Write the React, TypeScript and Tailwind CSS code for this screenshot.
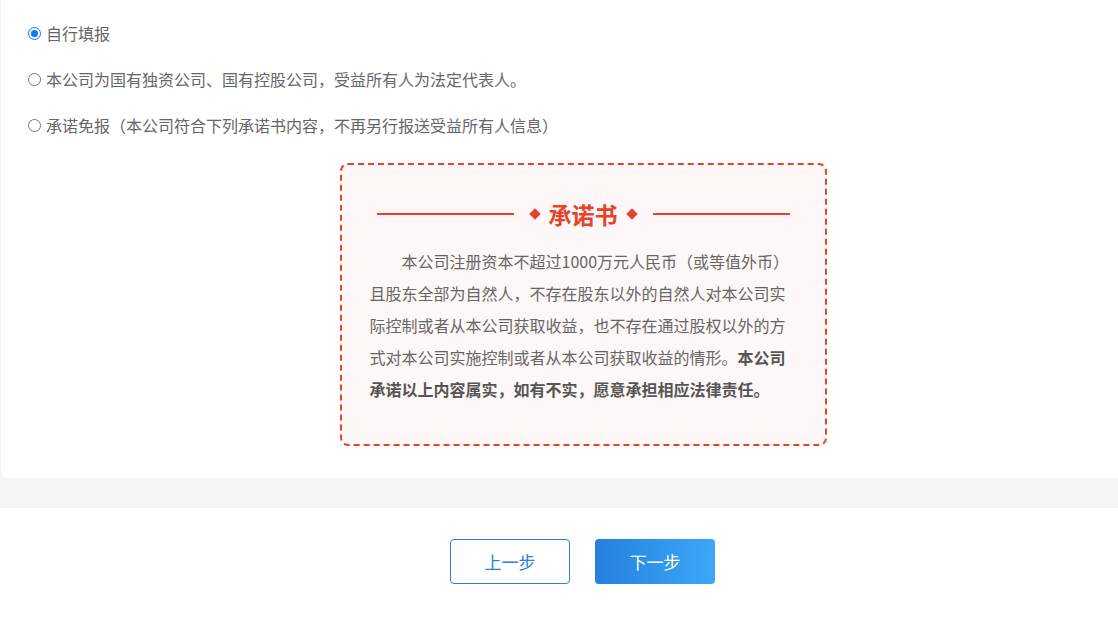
import React from "react";

const font = { fontFamily: '"Noto Sans CJK SC", "Noto Sans", sans-serif' };

function Radio({ checked }: { checked?: boolean }) {
  return checked ? (
    <span className="flex h-[13px] w-[13px] items-center justify-center rounded-full border-[1.5px] border-[#0a78ff] bg-white">
      <span className="h-[7px] w-[7px] rounded-full bg-[#0a78ff]" />
    </span>
  ) : (
    <span className="h-[13px] w-[13px] rounded-full border border-[#767676] bg-white" />
  );
}

export default function App() {
  const options = [
    { label: "自行填报", checked: true },
    { label: "本公司为国有独资公司、国有控股公司，受益所有人为法定代表人。" },
    { label: "承诺免报（本公司符合下列承诺书内容，不再另行报送受益所有人信息）" },
  ];
  return (
    <div className="w-[1118px] h-[623px] overflow-hidden bg-white" style={font}>
      <div className="w-[1165px]">
        <div className="bg-[#f5f5f5] pl-[1px] pb-[30px]">
          <div className="bg-white rounded-b-[6px] pt-[10px] pb-[32px]">
            <div className="pl-[27px]">
              {options.map((o, i) => (
                <div key={i} className="flex h-[46px] items-center gap-[5px] text-[16px] text-[#666]">
                  <Radio checked={o.checked} />
                  <span>{o.label}</span>
                </div>
              ))}
            </div>
            <div className="mx-auto mt-[15px] w-[487px] h-[283px] rounded-[8px] border-2 border-dashed border-[#e5432a] bg-[#fdf7f7] px-[28px] pt-[35px]">
              <div className="flex items-center justify-center">
                <span className="h-[2px] w-[137px] bg-[#e5432a]" />
                <span className="ml-[17px] h-[8px] w-[8px] rotate-45 bg-[#e5432a]" />
                <span className="mx-[10px] text-[23px] font-bold leading-[28px] text-[#e5432a]">承诺书</span>
                <span className="h-[8px] w-[8px] rotate-45 bg-[#e5432a]" />
                <span className="ml-[17px] h-[2px] w-[137px] bg-[#e5432a]" />
              </div>
              <p className="mt-[17px] indent-[2em] text-[16px] leading-[32px] text-[#666]">
                本公司注册资本不超过1000万元人民币（或等值外币）且股东全部为自然人，不存在股东以外的自然人对本公司实际控制或者从本公司获取收益，也不存在通过股权以外的方式对本公司实施控制或者从本公司获取收益的情形。
                <b className="font-bold text-[#555]">本公司承诺以上内容属实，如有不实，愿意承担相应法律责任。</b>
              </p>
            </div>
          </div>
        </div>
        <div className="flex justify-center gap-[25px] pt-[31px]">
          <button className="h-[45px] w-[120px] rounded-[4px] border border-[#2a80dd] bg-white text-[17px] text-[#2a80dd]">
            上一步
          </button>
          <button className="h-[45px] w-[120px] rounded-[4px] bg-gradient-to-r from-[#2680e0] to-[#3ba8f7] text-[17px] text-white">
            下一步
          </button>
        </div>
      </div>
    </div>
  );
}
